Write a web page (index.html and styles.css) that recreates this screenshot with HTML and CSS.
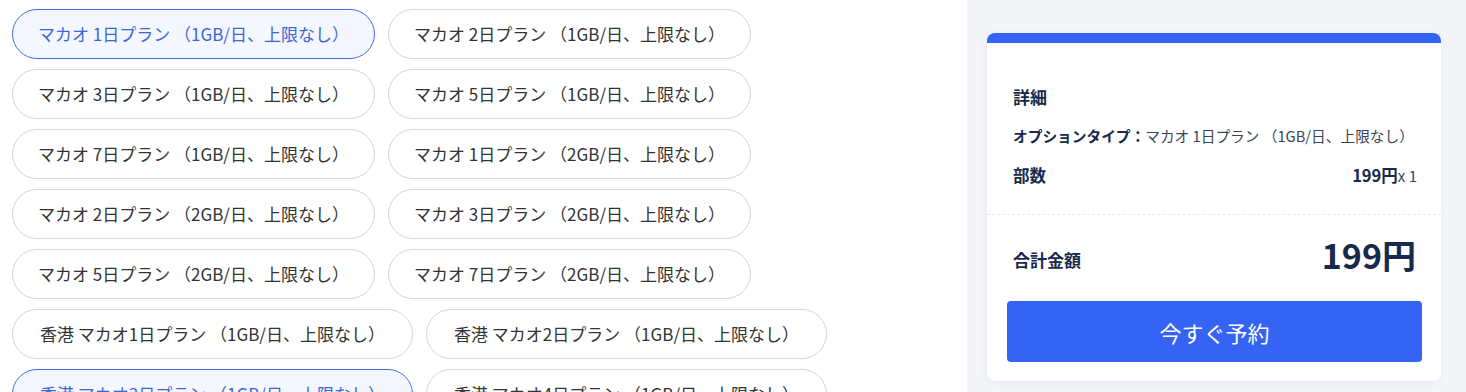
FILE: index.html
```html
<!DOCTYPE html>
<html lang="ja">
<head>
<meta charset="utf-8">
<title>プラン選択</title>
<link rel="stylesheet" href="styles.css">
</head>
<body>
<div class="page">
  <div class="options">
    <button class="pill selected">マカオ 1日プラン （1GB/日、上限なし）</button>
    <button class="pill">マカオ 2日プラン （1GB/日、上限なし）</button>
    <button class="pill">マカオ 3日プラン （1GB/日、上限なし）</button>
    <button class="pill">マカオ 5日プラン （1GB/日、上限なし）</button>
    <button class="pill">マカオ 7日プラン （1GB/日、上限なし）</button>
    <button class="pill">マカオ 1日プラン （2GB/日、上限なし）</button>
    <button class="pill">マカオ 2日プラン （2GB/日、上限なし）</button>
    <button class="pill">マカオ 3日プラン （2GB/日、上限なし）</button>
    <button class="pill">マカオ 5日プラン （2GB/日、上限なし）</button>
    <button class="pill">マカオ 7日プラン （2GB/日、上限なし）</button>
    <button class="pill wide">香港 マカオ1日プラン （1GB/日、上限なし）</button>
    <button class="pill wide">香港 マカオ2日プラン （1GB/日、上限なし）</button>
    <button class="pill wide selected">香港 マカオ3日プラン （1GB/日、上限なし）</button>
    <button class="pill wide">香港 マカオ4日プラン （1GB/日、上限なし）</button>
  </div>
  <aside class="side">
    <div class="card">
      <div class="details">
        <div class="title">詳細</div>
        <div class="row"><span class="label">オプションタイプ：</span><span class="value">マカオ 1日プラン （1GB/日、上限なし）</span></div>
        <div class="row spread"><span class="label big">部数</span><span><span class="label price">199円</span><span class="value qty">x 1</span></span></div>
      </div>
      <div class="summary">
        <div class="total">
          <span class="label">合計金額</span>
          <span class="amount">199円</span>
        </div>
        <button class="book">今すぐ予約</button>
      </div>
    </div>
  </aside>
</div>
</body>
</html>
```

FILE: styles.css
```css
* { box-sizing: border-box; }
html, body { margin: 0; padding: 0; background: #fff; }
body {
  font-family: "Noto Sans CJK JP", "Noto Sans", sans-serif;
  color: #333;
  width: 1466px;
  height: 392px;
  overflow: hidden;
}
.page {
  display: flex;
  height: 392px;
  overflow: hidden;
}
.options {
  width: 967px;
  height: 392px;
  overflow: hidden;
  padding: 9px 12px 0;
  display: flex;
  flex-wrap: wrap;
  align-content: flex-start;
  gap: 10.5px 13px;
}
.pill {
  font-family: inherit;
  font-size: 17px;
  line-height: 23px;
  height: 49.5px;
  padding: 12px 25px;
  border: 1px solid #d6d6d6;
  border-radius: 25px;
  background: #fff;
  color: #333;
  white-space: nowrap;
  cursor: pointer;
}
.pill.wide { padding: 12px 27px; }
.pill.selected {
  border-color: #4470dc;
  background: #f4f7ff;
  color: #3c66d4;
}
.side {
  flex: 1;
  background: #f3f5f9;
  padding: 33px 25px 0 20px;
}
.card {
  background: #fff;
  border-top: 10px solid #3563f4;
  border-radius: 8px;
  box-shadow: 0 2px 10px rgba(30, 50, 90, 0.06);
  color: #172a4c;
}
.details {
  padding: 42px 24px 26px 26px;
  border-bottom: 1px dashed #e6e8ec;
}
.title {
  font-size: 17px;
  font-weight: 700;
  line-height: 24px;
  margin-bottom: 15px;
}
.row {
  font-size: 14.7px;
  line-height: 24px;
  margin-bottom: 15px;
  white-space: nowrap;
}
.row:last-child { margin-bottom: 0; }
.row.spread {
  display: flex;
  justify-content: space-between;
  align-items: baseline;
}
.label { font-weight: 700; }
.label.big { font-size: 16.5px; }
.label.price { font-size: 16.5px; }
.value { font-weight: 400; color: #3a4456; }
.qty { font-size: 15px; }
.summary {
  padding: 20px 19px 19px 20px;
}
.total {
  display: flex;
  justify-content: space-between;
  align-items: center;
  padding: 0 6px;
  margin-bottom: 26px;
}
.total .label {
  font-size: 17px;
  line-height: 24px;
  padding-top: 10px;
}
.amount {
  font-size: 34px;
  font-weight: 700;
  line-height: 40px;
}
.book {
  display: block;
  width: 100%;
  height: 61px;
  border: none;
  border-radius: 4px;
  background: #3563f4;
  color: #fff;
  font-family: inherit;
  font-size: 22px;
  font-weight: 400;
  cursor: pointer;
}
```
